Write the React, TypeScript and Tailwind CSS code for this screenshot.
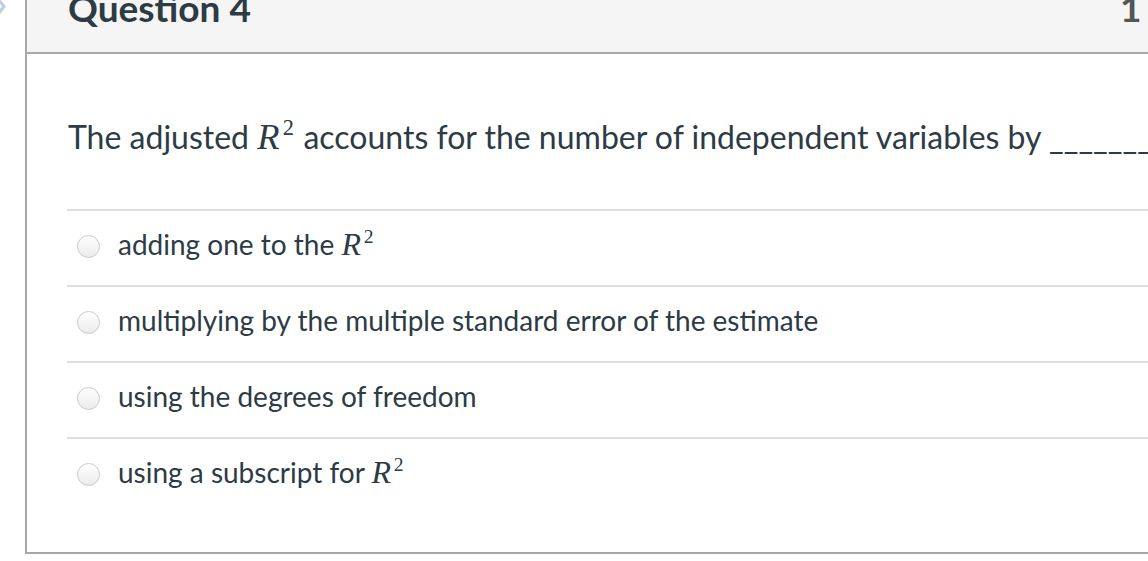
import React from "react";

const R2 = () => (
  <span className="whitespace-nowrap" style={{ fontFamily: '"Liberation Serif", "DejaVu Serif", serif' }}>
    <span className="italic text-[1.14em] leading-none pr-[0.04em]">R</span>
    <span className="text-[0.7em] leading-none relative -top-[0.62em] ml-[0.08em] mr-[0.06em]">2</span>
  </span>
);

const Radio = () => (
  <span className="block w-[23px] h-[23px] rounded-full border border-[#cacaca] bg-linear-to-b from-white to-[#ebebeb] shrink-0 mt-[8px]" />
);

const answers: React.ReactNode[] = [
  <>adding one to the <R2 /></>,
  <>multiplying by the multiple standard error of the estimate</>,
  <>using the degrees of freedom</>,
  <>using a subscript for <R2 /></>,
];

export default function App() {
  return (
    <div
      className="w-[1148px] h-[561px] overflow-hidden bg-white flex text-[#2d3b45]"
      style={{ fontFamily: 'Lato, "Open Sans", sans-serif' }}
    >
      <div className="w-[25px] shrink-0">
        <svg width="10" height="18" viewBox="0 0 10 18" className="-ml-[4px] -mt-[2px]">
          <path d="M2 1 L8 8.5 L2 16" fill="none" stroke="#bccddd" strokeWidth="3" strokeLinecap="round" strokeLinejoin="round" />
        </svg>
      </div>
      <div className="w-[1250px] shrink-0 h-[554px] border-l-2 border-b-2 border-[#a8a8a8] flex flex-col">
        <div className="h-[54px] shrink-0 bg-[#f5f5f5] border-b-2 border-[#a8a8a8] flex items-start pl-[41px]">
          <div className="w-[1052px] shrink-0 font-bold text-[37px] leading-[37px] -mt-[11px]">Question 4</div>
          <div className="font-bold text-[37px] leading-[37px] -mt-[11px] text-[#555] whitespace-nowrap">1 pts</div>
        </div>
        <div className="pl-[41px] pt-[63px]">
          <div className="text-[32px] leading-[40px] whitespace-nowrap">
            The adjusted <R2 /> accounts for the number of independent variables by{" "}
            <span>__________</span>
          </div>
        </div>
        <div className="ml-[40px] mt-[51px] flex flex-col">
          {answers.map((a, i) => (
            <div key={i} className="h-[76px] border-t-2 border-[#dedede] flex items-start pt-[16px] pl-[10px]">
              <Radio />
              <div className="ml-[18px] text-[28px] leading-[34px] whitespace-nowrap">{a}</div>
            </div>
          ))}
        </div>
      </div>
    </div>
  );
}
